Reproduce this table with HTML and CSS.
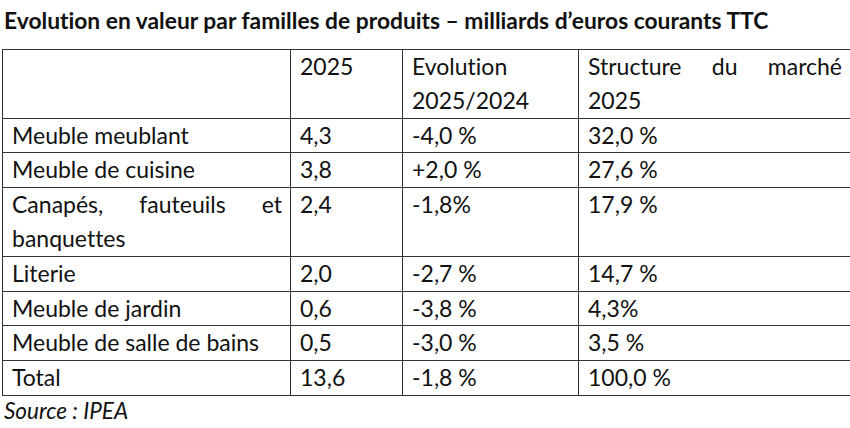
FILE: index.html
```html
<!DOCTYPE html>
<html lang="fr">
<head>
<meta charset="utf-8">
<link rel="stylesheet" href="styles.css">
</head>
<body>
<h1 class="title">Evolution en valeur par familles de produits – milliards d’euros courants TTC</h1>
<table class="data">
  <colgroup>
    <col class="c1"><col class="c2"><col class="c3"><col class="c4">
  </colgroup>
  <tr class="two">
    <td></td>
    <td>2025</td>
    <td>Evolution 2025/2024</td>
    <td class="just">Structure du marché 2025</td>
  </tr>
  <tr><td>Meuble meublant</td><td>4,3</td><td>-4,0 %</td><td>32,0 %</td></tr>
  <tr><td>Meuble de cuisine</td><td>3,8</td><td>+2,0 %</td><td>27,6 %</td></tr>
  <tr><td class="just">Canapés, fauteuils et banquettes</td><td>2,4</td><td>-1,8%</td><td>17,9 %</td></tr>
  <tr><td>Literie</td><td>2,0</td><td>-2,7 %</td><td>14,7 %</td></tr>
  <tr><td>Meuble de jardin</td><td>0,6</td><td>-3,8 %</td><td>4,3%</td></tr>
  <tr><td>Meuble de salle de bains</td><td>0,5</td><td>-3,0 %</td><td>3,5 %</td></tr>
  <tr><td>Total</td><td>13,6</td><td>-1,8 %</td><td>100,0 %</td></tr>
</table>
<p class="source">Source : IPEA</p>
</body>
</html>
```
FILE: styles.css
```css
html, body {
  margin: 0;
  padding: 0;
  background: #ffffff;
}
body {
  font-family: Lato, "Liberation Sans", sans-serif;
  font-variant-ligatures: none;
  color: #111111;
  width: 850px;
  height: 428px;
  overflow: hidden;
}
.title {
  margin: 0;
  padding: 7px 0 0 4px;
  height: 49px;
  box-sizing: border-box;
  font-size: 22.8px;
  font-weight: 700;
  line-height: 26px;
  white-space: nowrap;
}
.data {
  margin-left: 2px;
  width: 848px;
  border-collapse: collapse;
  table-layout: fixed;
  font-size: 23px;
}
.c1 { width: 288px; }
.c2 { width: 112px; }
.c3 { width: 176px; }
.c4 { width: 272px; }
.data td {
  border: 1px solid #333333;
  padding: 0 8px 0 9px;
  line-height: 33.8px;
  vertical-align: top;
  text-align: left;
}
.data td.just {
  text-align: justify;
}
.source {
  margin: 0;
  padding: 1px 0 0 4px;
  font-size: 22.5px;
  font-style: italic;
  line-height: 27px;
}
```
